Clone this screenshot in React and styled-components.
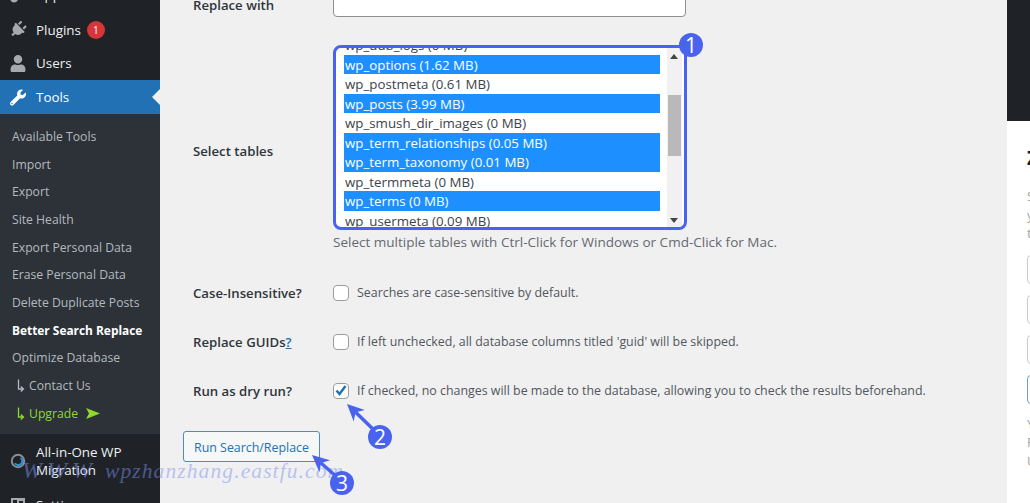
import React from "react";
import styled, { createGlobalStyle } from "styled-components";
import { FaPaintBrush, FaPlug, FaUser, FaWrench } from "react-icons/fa";

const GlobalStyle = createGlobalStyle`
	html, body {
		margin: 0;
		padding: 0;
		background: #f0f0f0;
	}
	body {
		font-family: "Open Sans", "Liberation Sans", sans-serif;
	}
`;

const Page = styled.div`
	position: relative;
	display: flex;
	width: 1030px;
	height: 503px;
	overflow: hidden;
	background: #f0f0f0;
`;

/* sidebar */
const Sidebar = styled.nav`
	flex: 0 0 160px;
	background: #1f2327;
	color: #eef0f1;
	font-size: 13.4px;
`;

const MenuItem = styled.div`
	position: relative;
	display: flex;
	align-items: center;
	gap: 10px;
	height: ${(p) => p.$height || 33}px;
	padding-left: 10px;
	background: ${(p) => (p.$active ? "#2271b5" : "transparent")};
	color: ${(p) => (p.$active ? "#fff" : "#eef0f1")};
	line-height: 18px;
`;

const MenuIcon = styled.span`
	flex: 0 0 16px;
	min-width: 0;
	display: flex;
	justify-content: center;
	color: ${(p) => (p.$active ? "#fff" : "#a7aaad")};
	font-size: 17px;
	transform: ${(p) => (p.$tilt ? "rotate(45deg)" : "none")};
`;

const UpdateCount = styled.span`
	display: inline-flex;
	align-items: center;
	justify-content: center;
	width: 18px;
	height: 18px;
	margin-left: -4px;
	border-radius: 50%;
	background: #d63638;
	color: #fff;
	font-size: 10px;
`;

const ActiveCaret = styled.span`
	position: absolute;
	right: 0;
	top: 50%;
	margin-top: -8px;
	border: 8px solid transparent;
	border-right-color: #f0f0f0;
	border-left-width: 0;
`;

const SubMenu = styled.div`
	display: flex;
	flex-direction: column;
	height: 320px;
	padding-top: 8.6px;
	box-sizing: border-box;
	background: #2c3238;
	font-size: 12.2px;
`;

const SubItem = styled.div`
	display: flex;
	align-items: center;
	gap: 4px;
	flex: 0 0 27.7px;
	padding-left: ${(p) => (p.$indent ? 17 : 12)}px;
	color: ${(p) => (p.$upgrade ? "#90d92b" : p.$current ? "#fff" : "#b4b9be")};
	font-weight: ${(p) => (p.$current ? 700 : 400)};
	font-size: ${(p) => (p.$current ? 11.9 : 12.2)}px;
	white-space: nowrap;
`;

const SidebarTop = styled.div`
	margin-top: -24px;
`;

/* main form */
const Main = styled.main`
	flex: 0 0 847px;
	min-width: 0;
	box-sizing: border-box;
	padding-left: 33px;
	margin-top: -15px;
	color: #3c434a;
	font-size: 13px;
`;

const Row = styled.div`
	display: grid;
	grid-template-columns: 140px 1fr;
	align-items: center;
	height: ${(p) => p.$height}px;
	margin-bottom: ${(p) => p.$after || 0}px;
`;

const Label = styled.div`
	padding-top: ${(p) => p.$drop || 0}px;
	font-size: 13.2px;
	font-weight: 600;
	color: #2f363c;
`;

const Underlined = styled.span`
	color: #2271b1;
	text-decoration: underline;
`;

const TextInput = styled.div`
	box-sizing: border-box;
	width: 353px;
	height: 32px;
	background: #fff;
	border: 1px solid #8c8f94;
	border-radius: 4px;
`;

const Field = styled.div`
	align-self: start;
	display: flex;
	flex-direction: column;
`;

const TablePicker = styled.div`
	box-sizing: border-box;
	display: flex;
	width: 354px;
	height: 185px;
	background: #fff;
	border: 3px solid #4a63ee;
	border-radius: 8px;
	overflow: hidden;
`;

const OptionList = styled.div`
	flex: 1;
	padding: 0 7px 0 8px;
	margin-top: -13px;
	font-size: 13.3px;
	color: #3c434a;
`;

const Option = styled.div`
	height: 19.5px;
	line-height: 21.5px;
	padding-left: 1px;
	white-space: nowrap;
	background: ${(p) => (p.$selected ? "#1e8fff" : "transparent")};
	color: ${(p) => (p.$selected ? "#fff" : "#3c434a")};
`;

const Scrollbar = styled.div`
	position: relative;
	flex: 0 0 15px;
	margin-right: 2px;
	background: #f1f1f1;
`;

const Thumb = styled.div`
	position: absolute;
	left: 1px;
	right: 1px;
	top: 47px;
	height: 61px;
	background: #b9b9b9;
`;

const ScrollArrow = styled.span`
	position: absolute;
	left: 3px;
	border: 4px solid transparent;
	${(p) =>
		p.$down
			? "bottom: 4px; border-top: 5px solid #444; border-bottom-width: 0;"
			: "top: 6px; border-bottom: 5px solid #444; border-top-width: 0;"}
`;

const Help = styled.div`
	margin-top: 3px;
	height: 19px;
	line-height: 19px;
	font-size: 13.5px;
	color: #646970;
`;

const CheckRow = styled.div`
	display: flex;
	align-items: center;
	gap: 8px;
	font-size: 12.4px;
	color: #50575e;
`;

const Checkbox = styled.span`
	box-sizing: border-box;
	display: flex;
	align-items: center;
	justify-content: center;
	width: 16px;
	height: 16px;
	background: #fff;
	border: 1px solid #9a9da1;
	border-radius: 4px;
`;

const SubmitButton = styled.button`
	box-sizing: border-box;
	display: block;
	width: 137px;
	height: 31px;
	margin-left: -10px;
	padding: 2px 0 0;
	background: #f6f7f7;
	border: 1px solid #4a8cc4;
	border-radius: 3px;
	color: #2271b1;
	font-family: inherit;
	font-size: 12.4px;
`;

/* right panel, cut off by the window */
const SidePanel = styled.aside`
	flex: 0 0 23px;
	display: flex;
	flex-direction: column;
	overflow: hidden;
`;

const PanelHead = styled.div`
	flex: 0 0 121px;
	background: #1f2327;
`;

const PanelBody = styled.div`
	flex: 1;
	background: #fff;
	padding: 28px 0 0 20px;
	font-size: 13px;
	line-height: 18.5px;
	color: #a2a5a8;
	white-space: nowrap;
`;

const PanelTitle = styled.div`
	height: 24px;
	margin-bottom: 14px;
	font-size: 20px;
	font-weight: 700;
	color: #1d2327;
`;

const PanelLines = styled.div`
	margin-bottom: ${(p) => p.$after || 0}px;
`;

const PanelBox = styled.div`
	box-sizing: border-box;
	width: 60px;
	height: 29px;
	margin-bottom: 11px;
	border: 1px solid ${(p) => (p.$blue ? "#6a9fd0" : "#c9cacc")};
	border-radius: 4px;
`;

/* annotations painted over the screenshot */
const Marks = styled.svg`
	position: absolute;
	inset: 0;
	pointer-events: none;
`;

const Badge = styled.span`
	position: absolute;
	left: ${(p) => p.$x - 12}px;
	top: ${(p) => p.$y - 12}px;
	display: flex;
	align-items: center;
	justify-content: center;
	width: 24px;
	height: 24px;
	border-radius: 50%;
	background: #4a63ee;
	color: #fff;
	font-size: 21px;
`;

const Watermark = styled.div`
	position: absolute;
	left: 22px;
	top: 457px;
	font-family: "Liberation Serif", serif;
	font-size: 21.5px;
	font-style: italic;
	letter-spacing: 1.1px;
	color: rgba(125, 145, 240, 0.5);
	white-space: nowrap;
	pointer-events: none;
`;

const WatermarkPrefix = styled.span`
	font-size: 24px;
	letter-spacing: 5px;
	margin-right: 8px;
`;

const tables = [
	["wp_ddb_logs (0 MB)", false],
	["wp_options (1.62 MB)", true],
	["wp_postmeta (0.61 MB)", false],
	["wp_posts (3.99 MB)", true],
	["wp_smush_dir_images (0 MB)", false],
	["wp_term_relationships (0.05 MB)", true],
	["wp_term_taxonomy (0.01 MB)", true],
	["wp_termmeta (0 MB)", false],
	["wp_terms (0 MB)", true],
	["wp_usermeta (0.09 MB)", false],
];

const toolLinks = [
	"Available Tools",
	"Import",
	"Export",
	"Site Health",
	"Export Personal Data",
	"Erase Personal Data",
	"Delete Duplicate Posts",
];

const Arrow = ({ from, to }) => {
	const dx = to[0] - from[0];
	const dy = to[1] - from[1];
	const len = Math.hypot(dx, dy);
	const ux = dx / len;
	const uy = dy / len;
	const bx = to[0] - ux * 17;
	const by = to[1] - uy * 17;
	const wing = (s) => `${bx - uy * 8 * s},${by + ux * 8 * s}`;
	const nx = to[0] - ux * 12;
	const ny = to[1] - uy * 12;
	return (
		<g fill="#4a63ee">
			<line x1={from[0]} y1={from[1]} x2={nx} y2={ny} stroke="#4a63ee" strokeWidth="3.5" />
			<polygon points={`${to[0]},${to[1]} ${wing(1)} ${nx},${ny} ${wing(-1)}`} />
		</g>
	);
};

const HookArrow = () => (
	<svg width="8" height="13" viewBox="0 0 8 13" fill="none" stroke="currentColor" strokeWidth="1.3">
		<path d="M1.5 0.5 V10 H5.5 M3.8 7.5 L6.5 10 L3.8 12.5" />
	</svg>
);

const App = () => {
	return (
		<Page>
			<GlobalStyle />
			<Sidebar>
				<SidebarTop>
					<MenuItem $height={37}>
						<MenuIcon>
							<FaPaintBrush />
						</MenuIcon>
						Appearance
					</MenuItem>
					<MenuItem>
						<MenuIcon $tilt>
							<FaPlug />
						</MenuIcon>
						Plugins
						<UpdateCount>1</UpdateCount>
					</MenuItem>
					<MenuItem $height={34}>
						<MenuIcon>
							<FaUser />
						</MenuIcon>
						Users
					</MenuItem>
					<MenuItem $active $height={34}>
						<MenuIcon $active>
							<FaWrench />
						</MenuIcon>
						Tools
						<ActiveCaret />
					</MenuItem>
				</SidebarTop>
				<SubMenu>
					{toolLinks.map((name) => (
						<SubItem key={name}>{name}</SubItem>
					))}
					<SubItem $current>Better Search Replace</SubItem>
					<SubItem>Optimize Database</SubItem>
					<SubItem $indent>
						<HookArrow />
						Contact Us
					</SubItem>
					<SubItem $indent $upgrade>
						<HookArrow />
						Upgrade
						<svg width="14" height="11" viewBox="0 0 14 11" fill="currentColor" style={{ marginLeft: 4 }}>
							<path d="M0 0 L14 5.5 L0 11 L3 5.5 Z" />
						</svg>
					</SubItem>
				</SubMenu>
				<MenuItem $height={54}>
					<MenuIcon>
						<svg width="18" height="18" viewBox="0 0 18 18" fill="none">
							<circle cx="9" cy="9" r="7" stroke="#8a8f94" strokeWidth="2.2" />
							<path d="M12 5.5 A4.5 4.5 0 1 1 5.5 11.5" stroke="#2f8fd0" strokeWidth="2.4" />
						</svg>
					</MenuIcon>
					<span>
						All-in-One WP
						<br />
						Migration
					</span>
				</MenuItem>
				<MenuItem>
					<MenuIcon>
						<svg width="16" height="16" viewBox="0 0 16 16" fill="#a7aaad">
							<path d="M1 1 H15 V15 H1 Z M3 3 V7 H7 V3 Z M9 4 V6 H13 V4 Z M3 10 V12 H7 V10 Z M9 9 V13 H13 V9 Z" fillRule="evenodd" />
						</svg>
					</MenuIcon>
					Settings
				</MenuItem>
			</Sidebar>

			<Main>
				<Row $height={32} $after={28}>
					<Label $drop={8}>Replace with</Label>
					<TextInput />
				</Row>
				<Row $height={212} $after={11}>
					<Label>Select tables</Label>
					<Field>
						<TablePicker>
							<OptionList>
								{tables.map(([name, selected]) => (
									<Option key={name} $selected={selected}>
										{name}
									</Option>
								))}
							</OptionList>
							<Scrollbar>
								<ScrollArrow />
								<Thumb />
								<ScrollArrow $down />
							</Scrollbar>
						</TablePicker>
						<Help>Select multiple tables with Ctrl-Click for Windows or Cmd-Click for Mac.</Help>
					</Field>
				</Row>
				<Row $height={49}>
					<Label>Case-Insensitive?</Label>
					<CheckRow>
						<Checkbox />
						Searches are case-sensitive by default.
					</CheckRow>
				</Row>
				<Row $height={49}>
					<Label>
						Replace GUIDs<Underlined>?</Underlined>
					</Label>
					<CheckRow>
						<Checkbox />
						If left unchecked, all database columns titled 'guid' will be skipped.
					</CheckRow>
				</Row>
				<Row $height={49} $after={16}>
					<Label>Run as dry run?</Label>
					<CheckRow>
						<Checkbox>
							<svg width="12" height="11" viewBox="0 0 12 11" fill="none" stroke="#2271b1" strokeWidth="2.4">
								<path d="M1.5 5.5 L4.5 9 L10.5 1" />
							</svg>
						</Checkbox>
						If checked, no changes will be made to the database, allowing you to check the results beforehand.
					</CheckRow>
				</Row>
				<SubmitButton>Run Search/Replace</SubmitButton>
			</Main>

			<SidePanel>
				<PanelHead />
				<PanelBody>
					<PanelTitle>Z</PanelTitle>
					<PanelLines $after={12}>
						<div>S</div>
						<div>y</div>
						<div>t</div>
					</PanelLines>
					<PanelBox />
					<PanelBox />
					<PanelBox />
					<PanelBox $blue />
					<PanelLines>
						<div>Y</div>
						<div>P</div>
						<div>U</div>
					</PanelLines>
				</PanelBody>
			</SidePanel>

			<Watermark>
				<WatermarkPrefix>WWW</WatermarkPrefix>wpzhanzhang.eastfu.com
			</Watermark>
			<Marks width="1030" height="503" viewBox="0 0 1030 503">
				<Arrow from={[376, 432]} to={[347, 404]} />
				<Arrow from={[338, 478]} to={[312, 455]} />
			</Marks>
			<Badge $x={691} $y={45}>1</Badge>
			<Badge $x={380} $y={437}>2</Badge>
			<Badge $x={342} $y={483}>3</Badge>
		</Page>
	);
};

export default App;
